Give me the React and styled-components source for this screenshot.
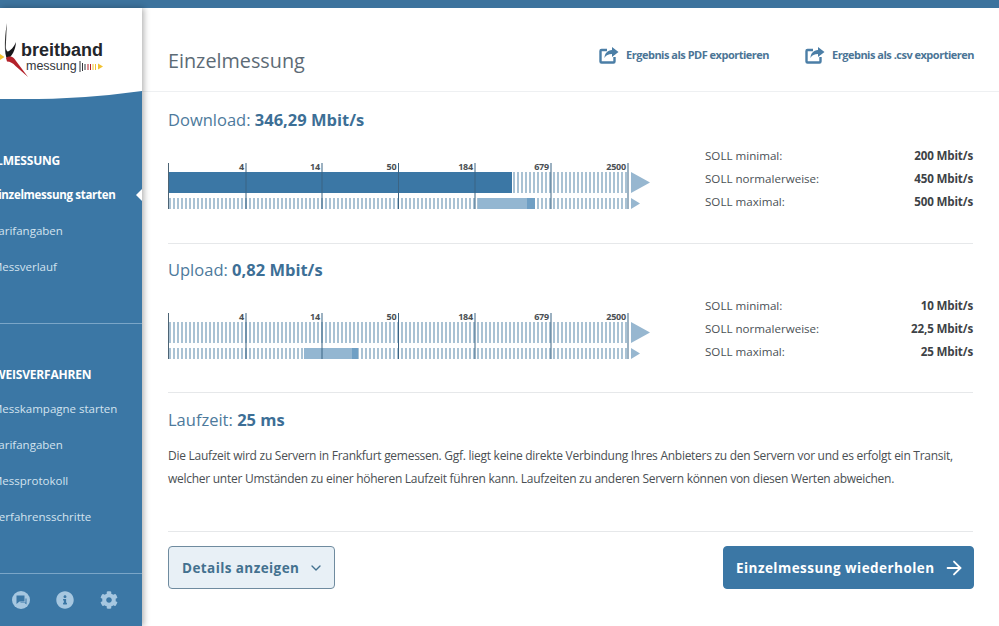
import React from 'react';
import styled, { createGlobalStyle } from 'styled-components';
import { ChevronDown, ArrowRight } from 'lucide-react';
import { FaInfoCircle, FaCog } from 'react-icons/fa';

const GlobalStyle = createGlobalStyle`
  html, body {
    margin: 0;
    height: 100%;
    overflow: hidden;
    background: #fff;
    font-family: "Open Sans", "Noto Sans", sans-serif;
    color: #444;
  }
`;

const blue = '#3b77a5';

const TopBar = styled.div`
  height: 8px;
  background: #3d739d;
`;

const Shell = styled.div`
  display: flex;
  height: 618px;
`;

const Sidebar = styled.aside`
  position: relative;
  flex: 0 0 142px;
  overflow: hidden;
  background: ${blue};
  box-shadow: 2px 0 6px rgba(0, 0, 0, 0.3);
  z-index: 1;
`;

const LogoPanel = styled.div`
  position: relative;
  height: 91px;
  padding-top: 32px;
  box-sizing: border-box;
  background: #fff;
  clip-path: path('M0 0H142V83Q70 93 0 91Z');
`;

const LogoMark = styled.svg`
  position: absolute;
  left: 0;
  top: 14px;
`;

const WordMark = styled.div`
  margin-left: 21px;
  font-family: "Liberation Sans", sans-serif;
  font-size: 18px;
  font-weight: 700;
  line-height: 20px;
  color: #23262b;
`;

const SubMark = styled.div`
  display: flex;
  align-items: center;
  margin-left: 26px;
  font-family: "Liberation Sans", sans-serif;
  font-size: 12.5px;
  line-height: 13px;
  color: #33373c;

  svg {
    margin-left: 2px;
  }
`;

const NavGroup = styled.nav`
  padding: ${(p) => p.$top}px 0 38px;
  border-bottom: 1px solid #7ba6c8;
`;

const NavHeading = styled.div`
  margin: 0 0 6px ${(p) => p.$indent}px;
  font-size: 12px;
  font-weight: 700;
  line-height: 20px;
  letter-spacing: -0.2px;
  white-space: nowrap;
  color: #fff;
`;

const NavItem = styled.div`
  position: relative;
  height: 36px;
  margin-left: -8px;
  font-size: 11.5px;
  font-weight: ${(p) => (p.$active ? 700 : 400)};
  letter-spacing: ${(p) => (p.$active ? -0.3 : 0)}px;
  line-height: 36px;
  white-space: nowrap;
  color: ${(p) => (p.$active ? '#fff' : '#d3e3ef')};

  ${(p) =>
    p.$active &&
    `&::after {
      content: '';
      position: absolute;
      right: 0;
      top: 12px;
      border: 6px solid transparent;
      border-left-width: 0;
      border-right-color: #fff;
    }`}
`;

const SideIcons = styled.div`
  display: flex;
  align-items: center;
  gap: 26px;
  padding: 17px 0 0 12px;
  color: #a6c7e0;
`;

const Main = styled.main`
  flex: 1;
  min-width: 0;
`;

const Header = styled.header`
  display: flex;
  align-items: center;
  justify-content: space-between;
  height: 84px;
  box-sizing: border-box;
  padding: 22px 26px 0;
  border-bottom: 1px solid #eef0f2;
`;

const Title = styled.h1`
  margin: 0;
  font-size: 19.8px;
  font-weight: 400;
  color: #5d6b76;
`;

const Exports = styled.div`
  display: flex;
  gap: 36px;
  margin-right: -1px;
  padding-bottom: 12px;
`;

const ExportLink = styled.a`
  display: flex;
  align-items: center;
  gap: 7px;
  font-size: 11px;
  font-weight: 700;
  letter-spacing: -0.5px;
  color: #4b7596;
`;

const Content = styled.div`
  padding: 2px 26px 0;
`;

const Section = styled.section`
  padding: ${(p) => p.$top || 14}px 0 ${(p) => p.$bottom || 29}px;
  border-bottom: 1px solid #e6e8ea;
`;

const SectionTitle = styled.h2`
  margin: 0;
  font-size: 16.5px;
  font-weight: 400;
  line-height: 24px;
  color: #4d7a9c;

  strong {
    font-weight: 700;
    color: #3d6f96;
  }
`;

const MeasureRow = styled.div`
  display: flex;
  justify-content: space-between;
  margin-top: 13px;
`;

const Gauge = styled.svg`
  display: block;
  margin-top: 17px;
`;

const Specs = styled.dl`
  width: 268px;
  margin: -1px 0 1px;
`;

const SpecRow = styled.div`
  display: flex;
  justify-content: space-between;
  font-size: 11.6px;
  line-height: 23px;
  color: #4a5156;

  dd {
    margin: 0;
    font-weight: 700;
    letter-spacing: -0.15px;
    color: #3d4246;
  }
`;

const Note = styled.p`
  margin: 12px 0 0;
  font-size: 12px;
  line-height: 23px;
  letter-spacing: -0.27px;
  color: #4a4f53;
`;

const Actions = styled.div`
  display: flex;
  justify-content: space-between;
  margin-right: -1px;
  padding-top: 14px;
`;

const Button = styled.button`
  display: flex;
  align-items: center;
  gap: ${(p) => (p.$primary ? 8 : 9)}px;
  width: ${(p) => (p.$primary ? 251 : 167)}px;
  height: 43px;
  box-sizing: border-box;
  padding: 0 0 0 ${(p) => (p.$primary ? 12 : 13)}px;
  border: 1px solid ${(p) => (p.$primary ? blue : '#6f8b9f')};
  border-radius: 4px;
  background: ${(p) => (p.$primary ? blue : '#e8f0f6')};
  color: ${(p) => (p.$primary ? '#fff' : '#43718f')};
  font-family: inherit;
  font-size: 13.5px;
  font-weight: 700;
  letter-spacing: ${(p) => (p.$primary ? 0.45 : 0.42)}px;
`;

const ticks = [
  { x: 78, label: '4' },
  { x: 154, label: '14' },
  { x: 230.5, label: '50' },
  { x: 307, label: '184' },
  { x: 383, label: '679' },
  { x: 460, label: '2500' },
];

// one gauge: striped scale, filled value bar, lower band for the target range
const GaugeChart = ({ id, fill, band }) => (
  <Gauge width="482" height="48" viewBox="0 0 482 48">
    <defs>
      <pattern id={id} width="4" height="10" patternUnits="userSpaceOnUse">
        <rect x="1" width="2" height="10" fill="#a9c2d4" />
      </pattern>
    </defs>
    <rect x="1" y="10" width="459" height="21" fill={`url(#${id})`} />
    <rect x="1" y="36" width="459" height="11" fill={`url(#${id})`} />
    {fill > 0 && <rect x="0" y="10" width={fill} height="21" fill={blue} />}
    <rect x={band[0]} y="36" width={band[1] - band[0]} height="11" fill="#93b6d1" />
    <rect x={band[1]} y="36" width={band[2] - band[1]} height="11" fill="#6f9fc4" />
    <polygon points="463,10 482,20.5 463,31" fill="#97b7d0" />
    <polygon points="463,36 472,41.5 463,47" fill="#97b7d0" />
    <rect x="0" y="1" width="1" height="46" fill="#4c6374" />
    {ticks.map((t) => (
      <g key={t.label}>
        <rect x={t.x - 0.5} y="1" width="1" height="46" fill="#3b6484" />
        <text
          x={t.x - 2}
          y="8"
          textAnchor="end"
          fontFamily="'Open Sans', sans-serif"
          fontSize="9"
          fontWeight="700"
          letterSpacing="-0.2"
          fill="#4a4f53"
        >
          {t.label}
        </text>
      </g>
    ))}
  </Gauge>
);

const ExportIcon = () => (
  <svg width="20" height="18" viewBox="0 0 20 18" fill="none">
    <path d="M8 4H2.5A1 1 0 0 0 1.5 5v10.5a1 1 0 0 0 1 1h12a1 1 0 0 0 1-1V11" stroke="#4b7ea6" strokeWidth="2.4" />
    <path d="M13 1l6.5 5L13 11V8C9.5 8 7 9 5.5 12c0-4.5 3-7.5 7.5-8z" fill="#4b7ea6" />
  </svg>
);

const ChatIcon = () => (
  <svg width="18" height="18" viewBox="0 0 18 18">
    <circle cx="9" cy="9" r="9" fill="currentColor" />
    <path d="M4.5 4.5h8v6h-5l-3 2.5z" fill={blue} />
    <path d="M8.5 12h4.2l1.8 1.6V7.5h-1v4H8.5z" fill={blue} />
  </svg>
);

const BrandSwoosh = () => (
  <LogoMark width="32" height="58" viewBox="0 0 32 58">
    <path d="M7 1C4.8 12 4.4 24 5.4 33 6 24 6.2 12 7 1z" fill="#3a3a3a" />
    <path d="M16 20C14 25 10.5 29 7.5 29.5 6.5 29 6 27 5.8 25 5 30 5.5 34 7 37 12 35 15.5 28 16 20z" fill="#17171a" />
    <path d="M6 36C10 33 14 35 16 39L28 55 15.5 44C13 41 10 39.5 7 39.5z" fill="#b3212a" />
    <path d="M0 32L4.5 35 0 38z" fill="#f2c230" />
  </LogoMark>
);

const Ticks = () => (
  <svg width="25" height="11" viewBox="0 0 25 11">
    <path d="M1 0v11M3.5 2v8M6 3v6" stroke="#33373c" strokeWidth="1" />
    <path d="M9 3v6M11.5 3v6" stroke="#b3212a" strokeWidth="1" />
    <path d="M14 3v6M16.5 3v6" stroke="#f2c230" strokeWidth="1" />
    <path d="M19 2.5l5 3-5 3z" fill="#f2c230" />
  </svg>
);

const Measure = ({ id, label, value, fill, band, specs, bottom }) => (
  <Section $bottom={bottom}>
    <SectionTitle>
      {label}: <strong>{value}</strong>
    </SectionTitle>
    <MeasureRow>
      <GaugeChart id={id} fill={fill} band={band} />
      <Specs>
        {specs.map(([k, v]) => (
          <SpecRow key={k}>
            <dt>{k}</dt>
            <dd>{v}</dd>
          </SpecRow>
        ))}
      </Specs>
    </MeasureRow>
  </Section>
);

const App = () => (
  <>
    <GlobalStyle />
    <TopBar />
    <Shell>
      <Sidebar>
        <LogoPanel>
          <BrandSwoosh />
          <WordMark>breitband</WordMark>
          <SubMark>
            messung
            <Ticks />
          </SubMark>
        </LogoPanel>
        <NavGroup $top={52}>
          <NavHeading $indent={-37}>EINZELMESSUNG</NavHeading>
          <NavItem $active>Einzelmessung starten</NavItem>
          <NavItem>Tarifangaben</NavItem>
          <NavItem>Messverlauf</NavItem>
        </NavGroup>
        <NavGroup $top={41}>
          <NavHeading $indent={-40}>NACHWEISVERFAHREN</NavHeading>
          <NavItem>Messkampagne starten</NavItem>
          <NavItem>Tarifangaben</NavItem>
          <NavItem>Messprotokoll</NavItem>
          <NavItem>Verfahrensschritte</NavItem>
        </NavGroup>
        <SideIcons>
          <ChatIcon />
          <FaInfoCircle size={18} />
          <FaCog size={18} />
        </SideIcons>
      </Sidebar>
      <Main>
        <Header>
          <Title>Einzelmessung</Title>
          <Exports>
            <ExportLink>
              <ExportIcon />
              Ergebnis als PDF exportieren
            </ExportLink>
            <ExportLink>
              <ExportIcon />
              Ergebnis als .csv exportieren
            </ExportLink>
          </Exports>
        </Header>
        <Content>
          <Measure
            id="down"
            label="Download"
            value="346,29 Mbit/s"
            fill={344}
            band={[310, 359, 367]}
            bottom={29}
            specs={[
              ['SOLL minimal:', '200 Mbit/s'],
              ['SOLL normalerweise:', '450 Mbit/s'],
              ['SOLL maximal:', '500 Mbit/s'],
            ]}
          />
          <Measure
            id="up"
            label="Upload"
            value="0,82 Mbit/s"
            fill={0}
            band={[136, 184, 190]}
            bottom={28}
            specs={[
              ['SOLL minimal:', '10 Mbit/s'],
              ['SOLL normalerweise:', '22,5 Mbit/s'],
              ['SOLL maximal:', '25 Mbit/s'],
            ]}
          />
          <Section $top={15} $bottom={41}>
            <SectionTitle>
              Laufzeit: <strong>25 ms</strong>
            </SectionTitle>
            <Note>
              Die Laufzeit wird zu Servern in Frankfurt gemessen. Ggf. liegt keine direkte Verbindung Ihres Anbieters zu den Servern vor und es erfolgt ein Transit,
              <br />
              welcher unter Umständen zu einer höheren Laufzeit führen kann. Laufzeiten zu anderen Servern können von diesen Werten abweichen.
            </Note>
          </Section>
          <Actions>
            <Button>
              Details anzeigen
              <ChevronDown size={16} />
            </Button>
            <Button $primary>
              Einzelmessung wiederholen
              <ArrowRight size={22} />
            </Button>
          </Actions>
        </Content>
      </Main>
    </Shell>
  </>
);

export default App;
